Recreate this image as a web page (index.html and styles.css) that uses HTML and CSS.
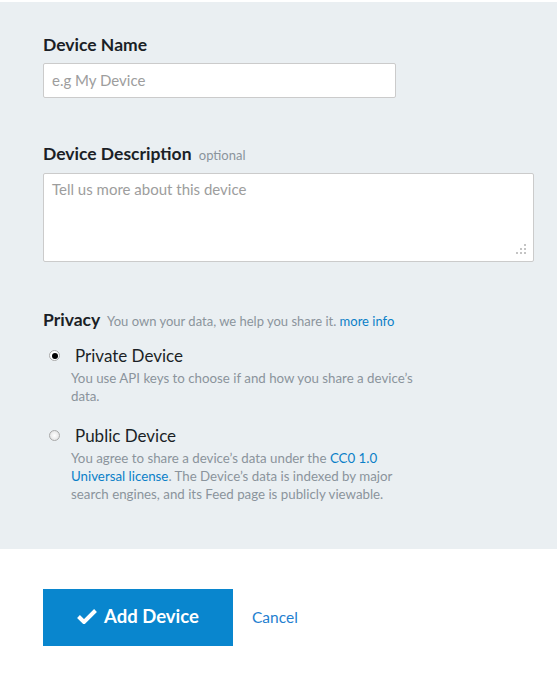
FILE: index.html
```html
<!DOCTYPE html>
<html>
<head>
<meta charset="utf-8">
<link rel="stylesheet" href="styles.css">
</head>
<body>
<div class="panel">
  <div class="field">
    <label class="label">Device Name</label>
    <div class="input">e.g My Device</div>
  </div>
  <div class="field field-desc">
    <label class="label">Device Description <span class="hint">optional</span></label>
    <div class="textarea">Tell us more about this device
      <svg class="grip" width="12" height="12" viewBox="0 0 12 12"><g fill="#c4c4c4"><rect x="9" y="1" width="2" height="2"/><rect x="5" y="5" width="2" height="2"/><rect x="9" y="5" width="2" height="2"/><rect x="1" y="9" width="2" height="2"/><rect x="5" y="9" width="2" height="2"/><rect x="9" y="9" width="2" height="2"/></g></svg>
    </div>
  </div>
  <div class="field field-privacy">
    <div class="label">Privacy <span class="sub">You own your data, we help you share it. <a class="link">more info</a></span></div>
    <div class="option option-first">
      <span class="radio checked"></span>
      <div class="opt-body">
        <div class="opt-title">Private Device</div>
        <div class="opt-desc">You use API keys to choose if and how you share a device’s data.</div>
      </div>
    </div>
    <div class="option">
      <span class="radio"></span>
      <div class="opt-body">
        <div class="opt-title">Public Device</div>
        <div class="opt-desc">You agree to share a device’s data under the <a class="link">CC0 1.0</a><br><a class="link">Universal license</a>. The Device’s data is indexed by major search engines, and its Feed page is publicly viewable.</div>
      </div>
    </div>
  </div>
</div>
<div class="actions">
  <button class="btn"><svg class="check" width="20" height="16" viewBox="0 0 20 16"><path d="M1.5 8.5 L7 14 L18.5 2.5" fill="none" stroke="#fff" stroke-width="4" stroke-linejoin="miter"/></svg>Add Device</button>
  <a class="cancel">Cancel</a>
</div>
</body>
</html>
```
FILE: styles.css
```css
html, body { margin: 0; padding: 0; background: #fff; }
body { font-family: Lato, "Open Sans", sans-serif; color: #1c2027; }
.panel {
  margin-top: 2px;
  width: 557px;
  background: #eaeff2;
  padding: 33px 0 0 43px;
  box-sizing: border-box;
  height: 547px;
}
.label { display: block; font-weight: 700; font-size: 17.5px; line-height: 20px; color: #1b1f26; }
.hint { font-weight: 400; font-size: 13px; color: #8b949c; margin-left: 3px; }
.input {
  margin-top: 8px;
  width: 353px; height: 35px; box-sizing: border-box;
  background: #fff; border: 1px solid #cbcbcb; border-radius: 2px;
  padding: 7px 8px; font-size: 15px; color: #9d9d9d; line-height: 19px;
}
.field-desc { margin-top: 46px; }
.textarea {
  position: relative;
  margin-top: 8px;
  width: 491px; height: 89px; box-sizing: border-box;
  background: #fff; border: 1px solid #cbcbcb; border-radius: 2px;
  padding: 6px 8px; font-size: 15px; color: #9d9d9d; line-height: 19px;
}
.grip { position: absolute; right: 6px; bottom: 6px; }
.field-privacy { margin-top: 48px; }
.sub { font-weight: 400; font-size: 13px; color: #8b949c; margin-left: 3px; }
.link { color: #0b7fc8; }
.option { display: flex; margin-top: 21px; }
.option-first { margin-top: 15px; }
.radio {
  width: 11px; height: 11px; border-radius: 50%; box-sizing: border-box;
  border: 1px solid #a9a9a9; background: radial-gradient(circle, #fff 0%, #dcdcdc 100%);
  margin: 4px 11px 0 6px; flex: none; position: relative;
}
.radio.checked { background: #fff; }
.radio.checked::after {
  content: ""; position: absolute; left: 1.5px; top: 1.5px; width: 6px; height: 6px; border-radius: 50%; background: #000;
}
.opt-title { font-size: 17px; line-height: 20px; color: #1b1f26; padding-left: 4px; }
.opt-desc { margin-top: 3px; width: 350px; font-size: 13.3px; line-height: 18px; color: #8b949c; }
.actions { display: flex; align-items: center; padding: 40px 0 0 43px; }
.btn {
  width: 190px; height: 57px; border: 0; border-radius: 0;
  background: #0986ce; color: #fff; font-family: Lato, sans-serif; font-weight: 700; font-size: 18.5px;
  display: flex; align-items: center; justify-content: center; gap: 7px; padding: 0 0 3px;
}
.cancel { margin-left: 19px; color: #1f80d0; font-size: 15.5px; margin-top: -2px; }
```
